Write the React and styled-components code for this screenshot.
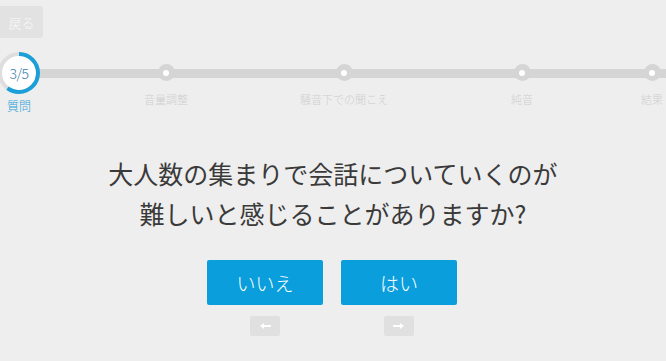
import React from "react";
import styled, { createGlobalStyle } from "styled-components";

const GlobalStyle = createGlobalStyle`
  html, body {
    margin: 0;
    padding: 0;
    background: #eeeeee;
    font-family: "Noto Sans CJK JP", "Noto Sans", sans-serif;
  }
`;

const Page = styled.div`
  width: 666px;
  height: 361px;
  overflow: hidden;
  display: flex;
  flex-direction: column;
`;

const BackButton = styled.button`
  margin-top: 6px;
  width: 43px;
  height: 32px;
  border: 0;
  border-radius: 0 3px 3px 0;
  background: #e2e2e2;
  color: #fafafa;
  font-family: inherit;
  font-size: 13px;
  font-weight: 300;
  padding: 0;
  text-align: center;
  cursor: pointer;
`;

const Steps = styled.div`
  position: relative;
  margin-top: 14px;
  display: grid;
  grid-template-columns: 40px 252px 104px 252px 8px;

  &::before {
    content: "";
    position: absolute;
    left: 20px;
    right: -20px;
    top: 17px;
    height: 9px;
    background: #d5d5d5;
  }
`;

const Step = styled.div`
  position: relative;
  z-index: 1;
  display: flex;
  flex-direction: column;
  align-items: center;
  padding-top: ${(p) => (p.current ? "0" : "12px")};
`;

const Ring = styled.div`
  position: relative;
  width: 42px;
  height: 42px;
  margin-left: -2px;
`;

const RingText = styled.span`
  position: absolute;
  inset: 0;
  display: flex;
  align-items: center;
  justify-content: center;
  color: #3b7fab;
  font-size: 14px;
  font-weight: 300;
  letter-spacing: -0.5px;
`;

const Node = styled.div`
  width: 17px;
  height: 17px;
  border-radius: 50%;
  background: #d5d5d5;
  display: flex;
  align-items: center;
  justify-content: center;

  &::after {
    content: "";
    width: 6px;
    height: 6px;
    border-radius: 50%;
    background: #fff;
  }
`;

const StepLabel = styled.span`
  white-space: nowrap;
  font-size: ${(p) => (p.current ? "12px" : "11px")};
  font-weight: 300;
  color: ${(p) => (p.current ? "#2a9fd6" : "#cfcfcf")};
  margin-top: ${(p) => (p.current ? "4px" : "11px")};
  margin-left: ${(p) => (p.current ? "-2px" : "0")};
  line-height: 15px;
`;

const Question = styled.h1`
  margin: 40px 0 0;
  text-align: center;
  font-size: 25px;
  font-weight: 400;
  line-height: 40px;
  color: #3a3a3a;
`;

const Answers = styled.div`
  margin-top: 27px;
  display: flex;
  justify-content: center;
  gap: 18px;
  padding-right: 2px;
`;

const AnswerCol = styled.div`
  display: flex;
  flex-direction: column;
  align-items: center;
  gap: 11px;
`;

const AnswerButton = styled.button`
  width: 116px;
  height: 45px;
  border: 0;
  border-radius: 2px;
  background: #0a9edc;
  color: #fff;
  font-family: inherit;
  font-size: 19px;
  font-weight: 300;
  cursor: pointer;
`;

const KeyHint = styled.div`
  width: 30px;
  height: 20px;
  border-radius: 2px;
  background: #e0e0e0;
  display: flex;
  align-items: center;
  justify-content: center;
`;

function Arrow({ right }) {
  return (
    <svg width="12" height="8" viewBox="0 0 12 8">
      <g transform={right ? "" : "translate(12,0) scale(-1,1)"}>
        <path d="M0 4 H9" stroke="#fff" strokeWidth="2" />
        <path d="M7 1 L11 4 L7 7 Z" fill="#fff" />
      </g>
    </svg>
  );
}

function ProgressRing({ value }) {
  const r = 19;
  const c = 2 * Math.PI * r;
  return (
    <svg width="42" height="42" viewBox="0 0 42 42">
      <circle cx="21" cy="21" r={r} fill="#fff" stroke="#dedede" strokeWidth="4" />
      <circle
        cx="21"
        cy="21"
        r={r}
        fill="none"
        stroke="#1a9fd9"
        strokeWidth="4"
        strokeDasharray={`${c * value} ${c}`}
        transform="rotate(-90 21 21)"
      />
    </svg>
  );
}

const steps = ["音量調整", "騒音下での聞こえ", "純音", "結果"];

export default function App() {
  return (
    <Page>
      <GlobalStyle />
      <BackButton>戻る</BackButton>
      <Steps>
        <Step current>
          <Ring>
            <ProgressRing value={3 / 5} />
            <RingText>3/5</RingText>
          </Ring>
          <StepLabel current>質問</StepLabel>
        </Step>
        {steps.map((s) => (
          <Step key={s}>
            <Node />
            <StepLabel>{s}</StepLabel>
          </Step>
        ))}
      </Steps>
      <Question>
        大人数の集まりで会話についていくのが
        <br />
        難しいと感じることがありますか?
      </Question>
      <Answers>
        <AnswerCol>
          <AnswerButton>いいえ</AnswerButton>
          <KeyHint>
            <Arrow />
          </KeyHint>
        </AnswerCol>
        <AnswerCol>
          <AnswerButton>はい</AnswerButton>
          <KeyHint>
            <Arrow right />
          </KeyHint>
        </AnswerCol>
      </Answers>
    </Page>
  );
}
